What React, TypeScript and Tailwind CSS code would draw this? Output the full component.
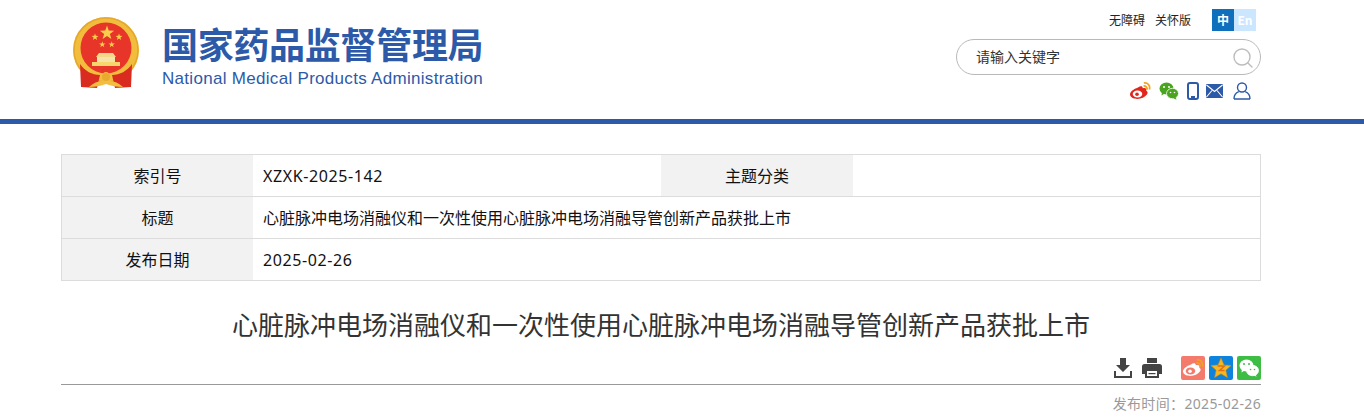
import { Search } from "lucide-react";

const FONT = "font-['Noto_Sans','Noto_Sans_CJK_SC',sans-serif]";

const starPoints = (cx: number, cy: number, r: number) =>
  Array.from({ length: 10 }, (_, i) => {
    const rad = i % 2 === 0 ? r : r * 0.4;
    const a = (Math.PI / 5) * i - Math.PI / 2;
    return `${(cx + rad * Math.cos(a)).toFixed(2)},${(cy + rad * Math.sin(a)).toFixed(2)}`;
  }).join(" ");

const Emblem = () => (
  <svg width="70" height="74" viewBox="0 0 70 74">
    <circle cx="34" cy="33" r="33" fill="#f2bd3d" />
    <circle cx="34" cy="33" r="32" fill="none" stroke="#e5a82e" strokeWidth="1.500" />
    <circle cx="34" cy="31" r="25.500" fill="#e8352a" />
    <polygon points={starPoints(35, 16, 7.500)} fill="#f8cf4a" />
    <polygon points={starPoints(23, 20, 3.600)} fill="#f8cf4a" />
    <polygon points={starPoints(47, 20, 3.600)} fill="#f8cf4a" />
    <polygon points={starPoints(30.300, 27.500, 3.300)} fill="#f8cf4a" />
    <polygon points={starPoints(39.700, 27.500, 3.300)} fill="#f8cf4a" />
    <path d="M27 36h14l3 4H24z" fill="#f4d88a" />
    <rect x="25" y="40" width="18" height="5" fill="#f6e3a8" />
    <rect x="20" y="45" width="28" height="4" fill="#f7d66b" />
    <path d="M8 47c5 7 12 11 20 11l-3 13-16-1z" fill="#d92b20" />
    <path d="M60 47c-5 7-12 11-20 11l3 13 16-1z" fill="#d92b20" />
    <path d="M17 70c4-4 9-6 13-6-2-3 0-9 4-9s6 6 4 9c4 0 9 2 13 6-6 0-12-1-17-3-5 2-11 3-17 3z" fill="#f3bd3f" />
    <circle cx="34" cy="60" r="4" fill="#e9a92f" />
  </svg>
);

const WeiboGlyph = ({ face, eye }: { face: string; eye: string }) => (
  <svg width="22" height="18" viewBox="0 0 22 18">
    <path d="M9 5.500c2.500-1.700 4.800-1.600 4.700.8 2.500-.8 4.300 0 3.600 2.400 1.500.6 1.700 2.300.6 3.900-1.800 2.700-5.700 4.400-9.500 4.400-4 0-7.400-1.800-7.400-4.700C1 10 4.500 7 9 5.500z" fill={face} />
    <ellipse cx="8.500" cy="12" rx="4.800" ry="3.500" fill={eye} />
    <circle cx="8" cy="12.300" r="1.800" fill={face} />
    <path d="M14.500 4c2.200-.4 4 1.400 3.500 3.600M14.800 1c3.900-.6 6.700 2.600 5.600 6.500" fill="none" stroke="#f0a21e" strokeWidth="1.700" />
  </svg>
);

const WechatGlyph = ({ back, front, eye }: { back: string; front: string; eye: string }) => (
  <svg width="20" height="18" viewBox="0 0 20 18">
    <ellipse cx="7.500" cy="6.500" rx="7" ry="6" fill={back} />
    <path d="M3 10l-.5 3.500L6.500 11z" fill={back} />
    <ellipse cx="13.500" cy="11.500" rx="6" ry="5.200" fill={front} stroke="#fff" strokeWidth=".8" />
    <path d="M16.500 15l1 2.800-3.500-1.800z" fill={front} />
    <circle cx="5" cy="5" r="1" fill={eye} />
    <circle cx="10" cy="5" r="1" fill={eye} />
    <circle cx="11.500" cy="10.500" r=".8" fill={eye} />
    <circle cx="15.500" cy="10.500" r=".8" fill={eye} />
  </svg>
);

const PhoneIcon = () => (
  <svg width="12" height="18" viewBox="0 0 12 18">
    <rect x="1" y="1" width="10" height="16" rx="2" fill="none" stroke="#2c5aa8" strokeWidth="2" />
    <rect x="4" y="14" width="4" height="2" fill="#2c5aa8" />
  </svg>
);

const MailIcon = () => (
  <svg width="17" height="14" viewBox="0 0 17 14">
    <rect width="17" height="14" rx="1" fill="#2c5aa8" />
    <path d="M.5 1l8 6.500 8-6.500M.5 13l5.500-6.500M16.500 13L11 6.500" fill="none" stroke="#fff" strokeWidth="1.100" />
  </svg>
);

const UserIcon = () => (
  <svg width="18" height="18" viewBox="0 0 18 18">
    <circle cx="9" cy="5.500" r="4.500" fill="none" stroke="#2c5aa8" strokeWidth="1.400" />
    <path d="M1 17c0-4 2.500-6.500 4.800-7.300M17 17c0-4-2.500-6.500-4.800-7.300M1 17h16" fill="none" stroke="#2c5aa8" strokeWidth="1.400" strokeLinejoin="round" />
  </svg>
);

const DownloadIcon = () => (
  <svg width="18" height="20" viewBox="0 0 18 20">
    <path d="M6 0h6v7h4l-7 7-7-7h4z" fill="#444" />
    <path d="M1 13v6h16v-6" fill="none" stroke="#444" strokeWidth="2" />
  </svg>
);

const PrinterIcon = () => (
  <svg width="20" height="20" viewBox="0 0 20 20">
    <path d="M5 0h10v5H5z" fill="#444" />
    <path d="M2.500 6h15A2.500 2.500 0 0 1 20 8.500V16h-3v-5H3v5H0V8.500A2.500 2.500 0 0 1 2.500 6z" fill="#444" />
    <rect x="4" y="12" width="12" height="7" fill="none" stroke="#444" strokeWidth="2" />
    <rect x="6.500" y="15" width="7" height="1.200" fill="#444" />
  </svg>
);

const QzoneIcon = () => (
  <svg width="22" height="22" viewBox="0 0 22 22">
    <polygon points="11,1 14,8 21,8.600 15.800,13.300 17.400,20.500 11,16.700 4.600,20.500 6.200,13.300 1,8.600 8,8" fill="#f6b81f" stroke="#d98a12" strokeWidth=".6" />
    <path d="M7.500 9h7l-5 4.500h5" fill="none" stroke="#e2701a" strokeWidth="1.500" />
  </svg>
);

const Header = () => (
  <header className="h-[119px] flex justify-between pl-[72px] pr-[103px] font-['Noto_Sans_CJK_SC',sans-serif]">
    <div className="flex pt-[17px]">
      <Emblem />
      <div className="ml-[20px] text-[#2c5aa8]">
        <div className="mt-[1px] text-[36px] leading-[50px] font-bold whitespace-nowrap tracking-[-0.3px]">国家药品监督管理局</div>
        <div className="text-[17px] leading-[20px] mt-[1px] tracking-[0.3px] whitespace-nowrap font-['Liberation_Sans',sans-serif]">National Medical Products Administration</div>
      </div>
    </div>
    <div className="w-[305px] flex flex-col items-end">
      <div className="flex items-center mt-[9px] pr-[5px] text-[12px] leading-[22px] text-[#222]">
        <span>无障碍</span>
        <span className="ml-[10px]">关怀版</span>
        <div className="flex ml-[21px] font-bold text-white">
          <span className="w-[22px] h-[22px] bg-[#0e6fbd] text-center">中</span>
          <span className="w-[22px] h-[22px] bg-[#cbe6ff] text-center">En</span>
        </div>
      </div>
      <div className="mt-[8px] w-[305px] h-[36px] border border-[#b9b9b9] rounded-[18px] flex items-center justify-between pl-[19px] pr-[5px]">
        <span className="text-[14px] leading-[20px] text-[#333] mt-[-2px]">请输入关键字</span>
        <Search className="w-[24px] h-[24px] text-[#bdbdbd] mt-[1px]" strokeWidth={1.400} />
      </div>
      <div className="mt-[5px] flex items-center pr-[10px] h-[22px]">
        <WeiboGlyph face="#e2261c" eye="#fff" />
        <div className="ml-[8px]">
          <WechatGlyph back="#4ba41f" front="#4ba41f" eye="#fff" />
        </div>
        <div className="ml-[8px]">
          <PhoneIcon />
        </div>
        <div className="ml-[7px]">
          <MailIcon />
        </div>
        <div className="ml-[10px]">
          <UserIcon />
        </div>
      </div>
    </div>
  </header>
);

const Label = ({ children, width = "w-[192px]" }: { children: string; width?: string }) => (
  <div className={`${width} shrink-0 bg-[#f2f2f2] flex items-center justify-center pb-[2px] font-['Noto_Sans_CJK_SC',sans-serif]`}>{children}</div>
);

const InfoTable = () => (
  <div className="ml-[61px] mr-[103px] mt-[30px] border border-[#dcdcdc] text-[16px] text-[#111]">
    <div className="flex h-[42px] border-b border-[#dcdcdc]">
      <Label width="w-[191px]">索引号</Label>
      <div className="w-[408px] shrink-0 flex items-center pl-[10px] tracking-[0.6px]">XZXK-2025-142</div>
      <Label>主题分类</Label>
      <div className="flex-1" />
    </div>
    <div className="flex h-[42px] border-b border-[#dcdcdc]">
      <Label width="w-[191px]">标题</Label>
      <div className="flex-1 flex items-center pl-[10px] pb-[2px] font-['Noto_Sans_CJK_SC',sans-serif]">心脏脉冲电场消融仪和一次性使用心脏脉冲电场消融导管创新产品获批上市</div>
    </div>
    <div className="flex h-[41px]">
      <Label width="w-[191px]">发布日期</Label>
      <div className="flex-1 flex items-center pl-[10px] tracking-[0.6px]">2025-02-26</div>
    </div>
  </div>
);

const Share = () => (
  <div className="flex items-center justify-end h-[24px]">
    <DownloadIcon />
    <div className="ml-[10px]">
      <PrinterIcon />
    </div>
    <div className="ml-[19px] w-[24px] h-[24px] rounded-[2px] bg-[#f47a6c] flex items-center justify-center">
      <WeiboGlyph face="#fff" eye="#f47a6c" />
    </div>
    <div className="ml-[4px] w-[24px] h-[24px] rounded-[2px] bg-[#0d83de] flex items-center justify-center">
      <QzoneIcon />
    </div>
    <div className="ml-[4px] w-[24px] h-[24px] rounded-[2px] bg-[#3ebd45] flex items-center justify-center">
      <WechatGlyph back="#fff" front="#fff" eye="#3ebd45" />
    </div>
  </div>
);

export default function App() {
  return (
    <div className={`w-[1364px] h-[417px] overflow-hidden bg-white ${FONT}`}>
      <Header />
      <div className="h-[5px] bg-[#2c5aa8]" />
      <InfoTable />
      <h1 className="mt-[23px] ml-[61px] mr-[103px] h-[40px] text-center text-[26px] leading-[40px] text-[#333] whitespace-nowrap font-['Noto_Sans_CJK_SC',sans-serif]">心脏脉冲电场消融仪和一次性使用心脏脉冲电场消融导管创新产品获批上市</h1>
      <div className="ml-[61px] mr-[103px] mt-[12px] pb-[4px] border-b border-[#999]">
        <Share />
      </div>
      <div className="ml-[61px] mr-[103px] mt-[9px] text-right text-[14px] leading-[20px] text-[#999] tracking-[0.35px]">发布时间：2025-02-26</div>
    </div>
  );
}
